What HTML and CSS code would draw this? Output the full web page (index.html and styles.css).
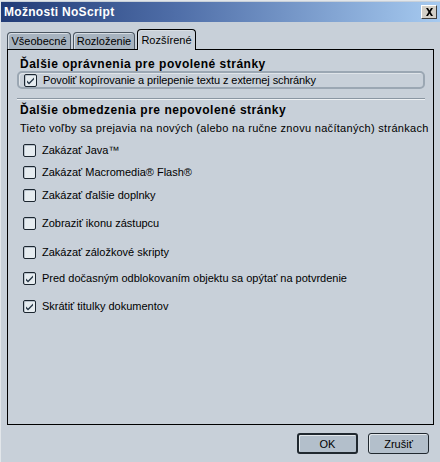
FILE: index.html
```html
<!DOCTYPE html>
<html>
<head>
  <meta charset="utf-8">
  <title>Možnosti NoScript</title>
  <link rel="stylesheet" href="styles.css">
</head>
<body>

<div class="window">
  <div class="titlebar">
    <span class="title">Možnosti NoScript</span>
    <span class="close">
      <svg width="9" height="8" viewBox="0 0 9 8"><path d="M1 0h2l1.5 2.5L6 0h2L5.5 4 8 8H6L4.5 5.5 3 8H1l2.5-4z" fill="#000"/></svg>
    </span>
  </div>

  <div class="tabs">
    <div class="tab general">Všeobecné</div>
    <div class="tab layout">Rozloženie</div>
    <div class="tab advanced selected">Rozšírené</div>
  </div>

  <div class="panel">
    <div class="heading">Ďalšie oprávnenia pre povolené stránky</div>
    <div class="group">
      <label class="row narrow"><span class="check on"></span>Povoliť kopírovanie a prilepenie textu z externej schránky</label>
    </div>

    <div class="sep"></div>

    <div class="heading">Ďalšie obmedzenia pre nepovolené stránky</div>
    <div class="desc">Tieto voľby sa prejavia na nových (alebo na ručne znovu načítaných) stránkach</div>

    <label class="row opt"><span class="check"></span>Zakázať Java™</label>
    <label class="row opt"><span class="check"></span>Zakázať Macromedia® Flash®</label>
    <label class="row opt gap1"><span class="check"></span>Zakázať ďalšie doplnky</label>
    <label class="row opt gap3"><span class="check"></span>Zobraziť ikonu zástupcu</label>
    <label class="row opt gap4"><span class="check"></span>Zakázať záložkové skripty</label>
    <label class="row opt gap2"><span class="check on"></span>Pred dočasným odblokovaním objektu sa opýtať na potvrdenie</label>
    <label class="row opt gap3"><span class="check on"></span>Skrátiť titulky dokumentov</label>
  </div>

  <div class="buttons">
    <button class="default">OK</button>
    <button>Zrušiť</button>
  </div>
</div>

</body>
</html>
```

FILE: styles.css
```css
body {
  margin: 0;
  font-family: "Liberation Sans", Arial, sans-serif;
  font-size: 11px;
  color: #000;
  background: #c8d0d9;
}

.window {
  width: 440px;
  height: 462px;
  box-sizing: border-box;
  border-left: 1px solid #e2e6ea;
  border-top: 1px solid #e2e6ea;
  display: flex;
  flex-direction: column;
}

.titlebar {
  height: 20px;
  margin-top: 1px;
  display: flex;
  align-items: center;
  padding: 0 3px 0 3px;
  background: linear-gradient(to right, #213b76, #4f6ea8 40%, #a6caf0);
}

.title {
  flex: 1;
  color: #fff;
  font-weight: bold;
  font-size: 12px;
  letter-spacing: 0.3px;
}

.close {
  width: 16px;
  height: 14px;
  box-sizing: border-box;
  display: flex;
  align-items: center;
  justify-content: center;
  background: #d4d0c8;
  border: 1px solid;
  border-color: #fff #404040 #404040 #fff;
}

.tabs {
  display: flex;
  align-items: flex-end;
  height: 20px;
  margin-top: 7px;
  padding-left: 6px;
  gap: 2px;
}

.tab {
  height: 17px;
  box-sizing: border-box;
  text-align: center;
  line-height: 16px;
  background: #a7b3bf;
  border: 1px solid #4a5560;
  border-bottom: none;
  border-radius: 4px 4px 0 0;
  box-shadow: inset 1px 1px 0 #d8dee4;
}

.tab.general { width: 64px; }
.tab.layout { width: 62px; }
.tab.advanced { width: 59px; }

.tab.selected {
  height: 21px;
  margin-bottom: -1px;
  line-height: 20px;
  background: #c8d0d9;
  border-color: #000;
  position: relative;
  z-index: 1;
}

.panel {
  height: 376px;
  margin: 0 6px 0 6px;
  box-sizing: border-box;
  border: 1px solid #000;
  padding: 8px 8px 0 9px;
  display: flex;
  flex-direction: column;
}

.heading {
  font-weight: bold;
  font-size: 12px;
  line-height: 13px;
  letter-spacing: 0.5px;
  padding-left: 3px;
}

.group {
  height: 18px;
  box-sizing: border-box;
  border: 2px solid #9ba7b3;
  border-radius: 5px;
  padding-left: 5px;
  display: flex;
  align-items: center;
  box-shadow: inset 1px 1px 0 #dfe4e9;
}

.row {
  display: flex;
  align-items: center;
  height: 14px;
  gap: 6px;
}

.row.narrow {
  letter-spacing: -0.1px;
}

.check {
  width: 13px;
  height: 13px;
  box-sizing: border-box;
  border: 1px solid #1c2630;
  border-radius: 2px;
  background: #e6ecf0;
  box-shadow: inset 1px 1px 0 #b8c2cc;
  flex: none;
}

.check.on {
  background: #e6ecf0 url("data:image/svg+xml;utf8,<svg xmlns='http://www.w3.org/2000/svg' width='11' height='11'><path d='M2 5.5l2 2 5-5v2l-5 5-2-2z' fill='%23283848'/></svg>") no-repeat center;
}

.sep {
  height: 1px;
  margin: 9px 0 0 0;
  background: #8a96a2;
  border-bottom: 1px solid #eef1f4;
}

.sep + .heading {
  margin-top: 4px;
}

.desc {
  margin-top: 5px;
  padding-left: 3px;
  line-height: 13px;
  letter-spacing: 0.3px;
  white-space: nowrap;
}

.opt {
  margin-top: 8px;
  padding-left: 6px;
}

.opt.gap1 { margin-top: 9px; }
.opt.gap2 { margin-top: 12px; }
.opt.gap3 { margin-top: 14px; }
.opt.gap4 { margin-top: 15px; }

.buttons {
  display: flex;
  justify-content: flex-end;
  gap: 10px;
  margin-top: 8px;
  padding-right: 11px;
}

button {
  width: 61px;
  height: 21px;
  font-family: inherit;
  font-size: 11px;
  background: #b3bfcb;
  border: 1px solid #20282f;
  border-radius: 3px;
  box-shadow: inset 1px 1px 0 #e3e8ec;
  padding: 0;
}

button.default {
  border-width: 2px;
}
```
